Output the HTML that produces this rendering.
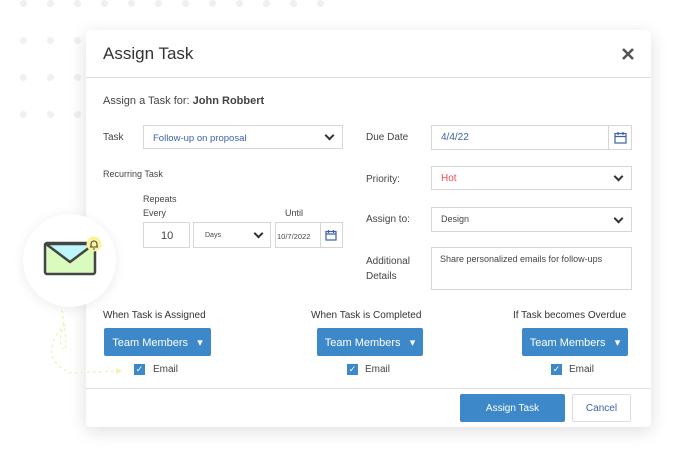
<!DOCTYPE html>
<html><head><meta charset="utf-8"><style>
*{box-sizing:border-box;margin:0;padding:0}
body{width:674px;height:454px;background:#fff;position:relative;overflow:hidden;font-family:"Liberation Sans",sans-serif;color:#444}
.a{position:absolute}
.dot{position:absolute;width:7px;height:7px;border-radius:50%;background:#f0f0f2}
.dlg{position:absolute;left:86px;top:30px;width:565px;height:397px;background:#fff;border-radius:4px;box-shadow:0 4px 18px rgba(0,0,0,.13)}
.box{position:absolute;border:1px solid #d6d6d6;background:#fff}
.t{position:absolute;white-space:nowrap}
.chev{position:absolute;width:7px;height:7px;border-right:2px solid #333;border-bottom:2px solid #333;transform:rotate(45deg)}
.btn{position:absolute;background:#3d88c8;color:#fff;border-radius:2px;font-size:11px;display:flex;align-items:center;justify-content:center}
.cb{position:absolute;width:11px;height:11px;background:#3d88c8;color:#fff;font-size:9px;line-height:11px;text-align:center}
</style></head><body>
<div class="dot" style="left:20px;top:0"></div><div class="dot" style="left:47px;top:0"></div><div class="dot" style="left:74px;top:0"></div><div class="dot" style="left:101px;top:0"></div><div class="dot" style="left:128px;top:0"></div><div class="dot" style="left:155px;top:0"></div><div class="dot" style="left:182px;top:0"></div><div class="dot" style="left:209px;top:0"></div><div class="dot" style="left:236px;top:0"></div><div class="dot" style="left:263px;top:0"></div><div class="dot" style="left:290px;top:0"></div><div class="dot" style="left:317px;top:0"></div>
<div class="dot" style="left:20px;top:37px"></div><div class="dot" style="left:47px;top:37px"></div><div class="dot" style="left:74px;top:37px"></div>
<div class="dot" style="left:20px;top:74px"></div><div class="dot" style="left:47px;top:74px"></div><div class="dot" style="left:74px;top:74px"></div>
<div class="dot" style="left:20px;top:111px"></div><div class="dot" style="left:47px;top:111px"></div><div class="dot" style="left:74px;top:111px"></div>

<div class="dlg">
 <div class="t" style="left:17px;top:14px;font-size:17px;color:#333">Assign Task</div>
 <svg class="a" style="left:535px;top:17px" width="14" height="14"><path d="M2 2L12 12M12 2L2 12" stroke="#555" stroke-width="2.6"/></svg>
 <div class="a" style="left:0;top:47px;width:565px;height:1px;background:#ddd"></div>
 <div class="t" style="left:17px;top:65px;font-size:11px">Assign a Task for: <b>John Robbert</b></div>
 <div class="t" style="left:17px;top:102px;font-size:10px">Task</div>
 <div class="box" style="left:57px;top:95px;width:200px;height:24px"><div class="t" style="left:9px;top:7px;font-size:9.5px;color:#3d5fa8">Follow-up on proposal</div><div class="chev" style="left:182px;top:6px"></div></div>
 <div class="t" style="left:17px;top:139px;font-size:9px">Recurring Task</div>
 <div class="t" style="left:57px;top:164px;font-size:9px">Repeats</div>
 <div class="t" style="left:57px;top:178px;font-size:9px">Every</div>
 <div class="t" style="left:199px;top:178px;font-size:9px">Until</div>
 <div class="box" style="left:57px;top:192px;width:47px;height:26px"><div class="t" style="left:17px;top:7px;font-size:11px">10</div></div>
 <div class="box" style="left:107px;top:192px;width:78px;height:26px"><div class="t" style="left:11px;top:9px;font-size:7px">Days</div><div class="chev" style="left:61px;top:7px"></div></div>
 <div class="box" style="left:189px;top:192px;width:68px;height:26px"><div class="t" style="left:1px;top:9px;font-size:7.5px">10/7/2022</div><div class="a" style="left:44px;top:0;width:1px;height:24px;background:#d6d6d6"></div>
  <svg class="a" style="left:49px;top:6px" width="12" height="12"><rect x="1" y="2.5" width="10" height="8.5" fill="none" stroke="#3d5fa8" stroke-width="1.2"/><path d="M1 5h10M3.5 1v3M8.5 1v3" stroke="#3d5fa8" stroke-width="1.2"/></svg></div>

 <div class="t" style="left:280px;top:102px;font-size:10px">Due Date</div>
 <div class="box" style="left:345px;top:95px;width:201px;height:25px"><div class="t" style="left:9px;top:6px;font-size:10px;color:#3d5fa8">4/4/22</div><div class="a" style="left:176px;top:0;width:1px;height:23px;background:#d6d6d6"></div>
  <svg class="a" style="left:182px;top:5px" width="13" height="13"><rect x="1" y="2.5" width="11" height="9.5" fill="none" stroke="#3d5fa8" stroke-width="1.2"/><path d="M1 5.5h11M4 1v3M9 1v3" stroke="#3d5fa8" stroke-width="1.2"/></svg></div>
 <div class="t" style="left:280px;top:144px;font-size:10px">Priority:</div>
 <div class="box" style="left:345px;top:136px;width:201px;height:24px"><div class="t" style="left:9px;top:6px;font-size:10px;color:#f04a4a">Hot</div><div class="chev" style="left:183px;top:6px"></div></div>
 <div class="t" style="left:280px;top:184px;font-size:10px">Assign to:</div>
 <div class="box" style="left:345px;top:177px;width:201px;height:25px"><div class="t" style="left:9px;top:6px;font-size:9px">Design</div><div class="chev" style="left:183px;top:7px"></div></div>
 <div class="t" style="left:280px;top:224px;font-size:10px;line-height:15px">Additional<br>Details</div>
 <div class="box" style="left:345px;top:217px;width:201px;height:43px"><div class="t" style="left:8px;top:6px;font-size:9px">Share personalized emails for follow-ups</div></div>

 <div class="t" style="left:17px;top:280px;font-size:10px;color:#333">When Task is Assigned</div>
 <div class="t" style="left:225px;top:280px;font-size:10px;color:#333">When Task is Completed</div>
 <div class="t" style="left:427px;top:280px;font-size:10px;color:#333">If Task becomes Overdue</div>
 <div class="btn" style="left:18px;top:298px;width:107px;height:28px">Team Members &nbsp;&nbsp;▾</div>
 <div class="btn" style="left:231px;top:298px;width:106px;height:28px">Team Members &nbsp;&nbsp;▾</div>
 <div class="btn" style="left:436px;top:298px;width:106px;height:28px">Team Members &nbsp;&nbsp;▾</div>
 <div class="cb" style="left:48px;top:334px">✓</div><div class="t" style="left:67px;top:334px;font-size:10px">Email</div>
 <div class="cb" style="left:261px;top:334px">✓</div><div class="t" style="left:279px;top:334px;font-size:10px">Email</div>
 <div class="cb" style="left:465px;top:334px">✓</div><div class="t" style="left:483px;top:334px;font-size:10px">Email</div>
 <div class="a" style="left:0;top:358px;width:565px;height:1px;background:#ddd"></div>
 <div class="btn" style="left:374px;top:364px;width:105px;height:28px;font-size:10px">Assign Task</div>
 <div class="a" style="left:486px;top:364px;width:59px;height:28px;border:1px solid #ddd;border-radius:2px;color:#3d5fa8;font-size:10px;display:flex;align-items:center;justify-content:center">Cancel</div>
</div>

<svg class="a" style="left:40px;top:305px" width="100" height="75"><path d="M22 5 C24 25 28 40 25 45 C18 45 20 25 26 18 C10 35 2 55 30 68 L80 66" fill="none" stroke="#f3f0b0" stroke-width="1.2" stroke-dasharray="3 3"/><path d="M76 63 L82 66 L76 69" fill="#f3f0b0"/></svg>

<div class="a" style="left:23px;top:214px;width:93px;height:93px;border-radius:50%;background:#fff;box-shadow:0 2px 12px rgba(0,0,0,.08)"></div>
<svg class="a" style="left:40px;top:235px" width="70" height="45"><rect x="5" y="8" width="50" height="31" rx="2" fill="#d9fbbd" stroke="#444" stroke-width="2.5"/><path d="M6 9h48L30 27Z" fill="#bff6fb" stroke="#444" stroke-width="2.5" stroke-linejoin="round"/><circle cx="54" cy="9" r="7.5" fill="#fbf39a"/><path d="M51 12v-3a3 3 0 0 1 6 0v3zM50 12h8M53 14h2" stroke="#444" stroke-width="1.1" fill="none"/></svg>
</body></html>
